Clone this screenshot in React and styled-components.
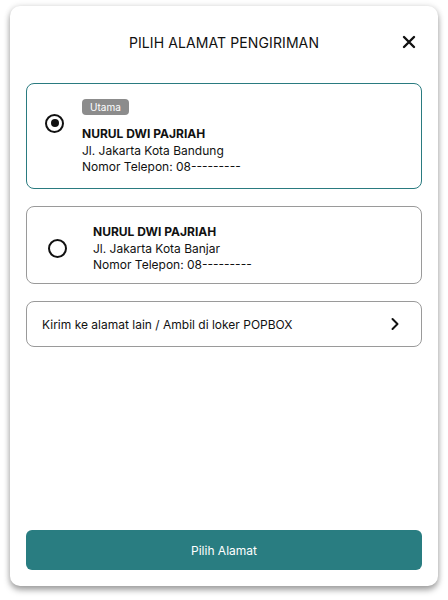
import React, { useState } from 'react'
import styled, { createGlobalStyle } from 'styled-components'

const GlobalStyle = createGlobalStyle`
  body {
    margin: 0;
    background: #ffffff;
    font-family: Inter, "Noto Sans", sans-serif;
  }
`

const addresses = [
  { id: 1, main: true, name: 'NURUL DWI PAJRIAH', street: 'Jl. Jakarta Kota Bandung', phone: 'Nomor Telepon: 08---------' },
  { id: 2, main: false, name: 'NURUL DWI PAJRIAH', street: 'Jl. Jakarta Kota Banjar', phone: 'Nomor Telepon: 08---------' },
]

const App = () => {
  const [selected, setSelected] = useState(1)

  return (
    <Page>
      <GlobalStyle />
      <Modal>
        <Header>
          <Title>PILIH ALAMAT PENGIRIMAN</Title>
          <Close aria-label='close'>
            <svg width='14' height='14' viewBox='0 0 14 14'>
              <path d='M2 2 L12 12 M12 2 L2 12' stroke='#111' strokeWidth='2.4' strokeLinecap='round' />
            </svg>
          </Close>
        </Header>

        <List>
          {addresses.map(a => (
            <Card key={a.id} active={selected === a.id} main={a.main} onClick={() => setSelected(a.id)}>
              <Radio active={selected === a.id} main={a.main} />
              <Info>
                {a.main && <Badge>Utama</Badge>}
                <Name>{a.name}</Name>
                <Line>{a.street}</Line>
                <Line>{a.phone}</Line>
              </Info>
            </Card>
          ))}

          <OtherRow>
            <span>Kirim ke alamat lain / Ambil di loker POPBOX</span>
            <svg width='10' height='14' viewBox='0 0 10 14'>
              <path d='M2.5 2 L7.5 7 L2.5 12' stroke='#111' strokeWidth='2' fill='none' strokeLinecap='round' strokeLinejoin='round' />
            </svg>
          </OtherRow>
        </List>

        <SubmitButton>Pilih Alamat</SubmitButton>
      </Modal>
    </Page>
  )
}

const Page = styled.div`
  width: 448px;
  height: 600px;
  padding: 6px 10px 0;
  box-sizing: border-box;
`

const Modal = styled.div`
  width: 428px;
  height: 580px;
  box-sizing: border-box;
  background: #ffffff;
  border-radius: 10px;
  box-shadow: 0 4px 6px rgba(0, 0, 0, 0.35), 0 0 6px rgba(0, 0, 0, 0.12);
  padding: 0 16px 16px;
  display: flex;
  flex-direction: column;
`

const Header = styled.div`
  height: 72px;
  display: flex;
  align-items: center;
  justify-content: center;
  position: relative;
`

const Title = styled.h1`
  margin: 0;
  font-size: 14px;
  font-weight: 400;
  color: #111;
  letter-spacing: 0.1px;
`

const Close = styled.button`
  position: absolute;
  right: 6px;
  top: 29px;
  border: none;
  background: none;
  padding: 0;
  display: flex;
`

const List = styled.div`
  display: flex;
  flex-direction: column;
  gap: 17px;
  padding-top: 5px;
  flex: 1;
`

const Card = styled.div`
  border: 1px solid ${p => (p.active ? '#2a7b80' : '#9a9a9a')};
  border-radius: 8px;
  display: flex;
  align-items: center;
  gap: ${p => (p.main ? '18px' : '26px')};
  padding: ${p => (p.main ? '15px 16px 13px 18px' : '17px 16px 10px 21px')};
  cursor: pointer;
`

const Radio = styled.span`
  width: 19px;
  height: 19px;
  border-radius: 50%;
  border: 2px solid #111;
  box-sizing: border-box;
  flex-shrink: 0;
  position: relative;
  margin-top: ${p => (p.main ? '-28px' : '0')};

  &::after {
    content: '';
    display: ${p => (p.active ? 'block' : 'none')};
    position: absolute;
    left: 3.5px;
    top: 3.5px;
    width: 8px;
    height: 8px;
    border-radius: 50%;
    background: #111;
  }
`

const Info = styled.div`
  display: flex;
  flex-direction: column;
  color: #111;
`

const Badge = styled.span`
  align-self: flex-start;
  background: #8c8c8c;
  color: #ffffff;
  font-size: 10px;
  border-radius: 4px;
  padding: 2px 8px;
  line-height: 12px;
  margin-bottom: 11px;
`

const Name = styled.div`
  font-size: 12px;
  font-weight: 700;
  line-height: 16px;
  margin-bottom: 1px;
`

const Line = styled.div`
  font-size: 12px;
  line-height: 16px;
`

const OtherRow = styled.div`
  border: 1px solid #9a9a9a;
  border-radius: 8px;
  height: 46px;
  box-sizing: border-box;
  display: flex;
  align-items: center;
  justify-content: space-between;
  padding: 0 21px 0 15px;
  font-size: 12px;
  color: #111;
`

const SubmitButton = styled.button`
  width: 100%;
  height: 40px;
  border: none;
  border-radius: 6px;
  background: #297d81;
  color: #ffffff;
  font-family: Inter, "Noto Sans", sans-serif;
  font-size: 12px;
  cursor: pointer;
`

export default App
